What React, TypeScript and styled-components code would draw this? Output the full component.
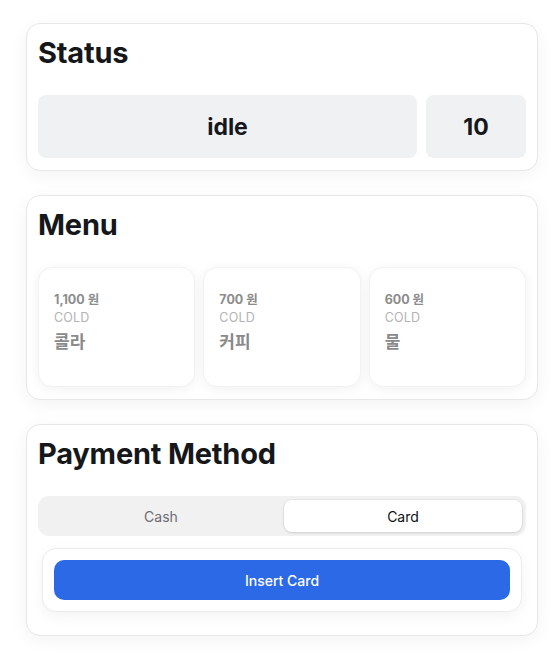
import React from "react";
import styled, { createGlobalStyle } from "styled-components";

const Global = createGlobalStyle`
  html, body { margin: 0; padding: 0; background: #ffffff; }
  body {
    font-family: Inter, "Noto Sans CJK KR", "Noto Sans", sans-serif;
    color: #111418;
    -webkit-font-smoothing: antialiased;
  }
  * { box-sizing: border-box; }
`;

const Page = styled.main`
  width: 551px;
  padding: 23px 13px 24px 26px;
  display: flex;
  flex-direction: column;
  gap: 24px;
`;

const Card = styled.section`
  background: #fff;
  border: 1px solid #e7e7e9;
  border-radius: 14px;
  box-shadow: 0 4px 18px rgba(0, 0, 0, 0.05);
  padding: 11px 11px 12px 11px;
  display: flex;
  flex-direction: column;
`;

const Title = styled.h2`
  margin: 0 0 25px 0;
  font-size: 29px;
  line-height: 35px;
  font-weight: 700;
  color: #15171a;
  letter-spacing: -0.2px;
`;

const StatusRow = styled.div`
  display: grid;
  grid-template-columns: 1fr 100px;
  gap: 9px;
`;

const StatusBox = styled.div`
  height: 63px;
  background: #f0f1f3;
  border-radius: 8px;
  display: flex;
  align-items: center;
  justify-content: center;
  font-size: 23px;
  font-weight: 700;
  color: #15171a;
`;

const MenuGrid = styled.div`
  display: grid;
  grid-template-columns: repeat(3, 1fr);
  gap: 8px;
`;

const MenuItem = styled.div`
  height: 120px;
  background: #fff;
  border-radius: 14px;
  border: 1px solid #f2f2f2;
  box-shadow: 0 2px 12px rgba(0, 0, 0, 0.06);
  padding: 23px 15px;
  display: flex;
  flex-direction: column;
`;

const Price = styled.div`
  font-size: 12.5px;
  line-height: 18px;
  font-weight: 700;
  color: #8c8c8c;
`;

const Temp = styled.div`
  font-size: 12.5px;
  line-height: 18px;
  color: #b3b3b3;
  letter-spacing: 0.2px;
`;

const Name = styled.div`
  margin-top: 3px;
  font-size: 17px;
  line-height: 24px;
  font-weight: 700;
  color: #8a8a8a;
`;

const Tabs = styled.div`
  background: #f1f1f2;
  border-radius: 11px;
  padding: 4px;
  display: grid;
  grid-template-columns: 1fr 1fr;
  gap: 4px;
  height: 40px;
`;

const Tab = styled.button<{ $active?: boolean }>`
  border: none;
  border-radius: 8px;
  font-family: inherit;
  font-size: 14px;
  cursor: pointer;
  background: ${(p) => (p.$active ? "#ffffff" : "transparent")};
  color: ${(p) => (p.$active ? "#0d0f12" : "#6b6b70")};
  box-shadow: ${(p) =>
    p.$active ? "0 1px 3px rgba(0,0,0,0.12), 0 0 0 1px rgba(0,0,0,0.03)" : "none"};
`;

const Panel = styled.div`
  margin: 12px 4px 11px 4px;
  background: #fff;
  border: 1px solid #ececec;
  border-radius: 14px;
  box-shadow: 0 4px 14px rgba(0, 0, 0, 0.05);
  padding: 11px;
`;

const PrimaryButton = styled.button`
  width: 100%;
  height: 40px;
  border: none;
  border-radius: 10px;
  background: #2c69e6;
  color: #fff;
  font-family: inherit;
  font-size: 14px;
  font-weight: 500;
  cursor: pointer;
`;

const menu = [
  { price: "1,100 원", temp: "COLD", name: "콜라" },
  { price: "700 원", temp: "COLD", name: "커피" },
  { price: "600 원", temp: "COLD", name: "물" },
];

export default function App() {
  return (
    <>
      <Global />
      <Page>
        <Card>
          <Title>Status</Title>
          <StatusRow>
            <StatusBox>idle</StatusBox>
            <StatusBox>10</StatusBox>
          </StatusRow>
        </Card>
        <Card>
          <Title>Menu</Title>
          <MenuGrid>
            {menu.map((m) => (
              <MenuItem key={m.name}>
                <Price>{m.price}</Price>
                <Temp>{m.temp}</Temp>
                <Name>{m.name}</Name>
              </MenuItem>
            ))}
          </MenuGrid>
        </Card>
        <Card>
          <Title>Payment Method</Title>
          <Tabs>
            <Tab>Cash</Tab>
            <Tab $active>Card</Tab>
          </Tabs>
          <Panel>
            <PrimaryButton>Insert Card</PrimaryButton>
          </Panel>
        </Card>
      </Page>
    </>
  );
}
